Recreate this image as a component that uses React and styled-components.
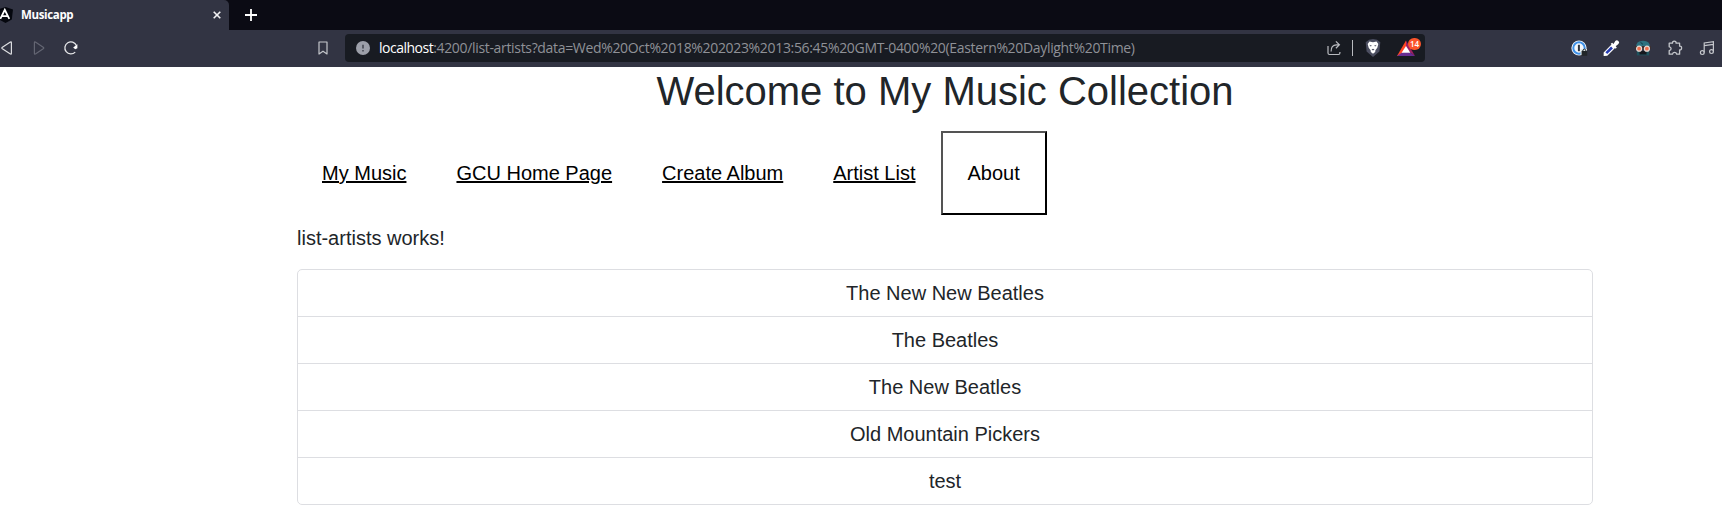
import React from 'react';
import styled, { createGlobalStyle } from 'styled-components';

const GlobalStyle = createGlobalStyle`
  *, *::before, *::after { box-sizing: border-box; }
  body {
    margin: 0;
    background: #fff;
    color: #212529;
    font: 20px/30px "Liberation Sans", Arial, sans-serif;
    overflow: hidden;
  }
`;

const BrowserChrome = styled.header`
  height: 67px;
  color: #fff;
  font-family: "Open Sans", "Noto Sans", sans-serif;
`;

const TabStrip = styled.div`
  display: flex;
  align-items: center;
  height: 30px;
  background: #0b0b14;
`;

const Tab = styled.div`
  display: flex;
  align-items: center;
  width: 229px;
  height: 30px;
  padding-right: 8px;
  background: #323443;
  border-top-right-radius: 5px;
`;

const TabTitle = styled.span`
  flex: 1;
  margin-left: 8px;
  font-size: 11.5px;
  font-weight: 700;
  line-height: 16px;
  letter-spacing: -0.35px;
`;

const NewTab = styled.div`
  display: flex;
  margin-left: 16px;
`;

const Toolbar = styled.div`
  display: flex;
  align-items: center;
  height: 37px;
  padding-bottom: 1px;
  background: #323443;
`;

const NavButtons = styled.div`
  display: flex;
  gap: 16px;
  width: 314px;
`;

const AddressBar = styled.div`
  display: flex;
  align-items: center;
  width: 1080px;
  height: 28px;
  margin-left: 15px;
  padding: 0 4px 0 10px;
  background: #181b22;
  border-radius: 4px;
`;

const Url = styled.span`
  flex: 1;
  margin-left: 8px;
  color: #8f9197;
  font-size: 14px;
  line-height: 18px;
  letter-spacing: -0.33px;
  white-space: nowrap;
`;

const Host = styled.span`
  color: #fff;
  letter-spacing: -0.5px;
`;

const Divider = styled.span`
  width: 1px;
  height: 16px;
  margin: 0 12px 0 11px;
  background: #b9bbc0;
`;

const Rewards = styled.div`
  position: relative;
  display: flex;
  margin-left: 16px;
  width: 24px;
  height: 20px;
`;

const Badge = styled.span`
  position: absolute;
  top: 0;
  left: 11px;
  width: 13px;
  height: 12px;
  border-radius: 6px;
  background: #fb542b;
  color: #fff;
  font-size: 8px;
  font-weight: 600;
  line-height: 12px;
  text-align: center;
`;

const Extensions = styled.div`
  display: flex;
  align-items: center;
  gap: 16px;
  margin-left: auto;
  padding-right: 7px;
`;

const Icon = styled.svg`
  display: block;
  flex: none;
  overflow: visible;
`;

const Page = styled.main`
  width: 1296px;
  margin-left: 297px;
`;

const Heading = styled.h1`
  margin: 0 0 16px;
  font-size: 40px;
  font-weight: 400;
  line-height: 48px;
  text-align: center;
`;

const Menu = styled.nav`
  display: flex;
  align-items: center;
  margin-bottom: 8px;
`;

const MenuLink = styled.a`
  padding: 25px;
  color: #000;
  text-decoration: underline;
  white-space: nowrap;
`;

const MenuButton = styled.button`
  padding: 25px;
  border: 2px outset #000;
  background: #fff;
  color: #000;
  font: inherit;
`;

const Status = styled.p`
  margin: 0 0 16px;
`;

const ArtistList = styled.ul`
  margin: 0;
  padding: 0;
  list-style: none;
  border: 1px solid #dddee2;
  border-radius: 5px;
  text-align: center;
`;

const Artist = styled.li`
  padding: 8px 16px;
  & + & { border-top: 1px solid #dddee2; }
`;

const AngularIcon = () => (
  <Icon width="13" height="16" viewBox="0 0 13 16">
    <path d="M0 1.8 5.5 0 13 2.5 11.8 12.5 5.5 16 0 13Z" fill="#05070e" />
    <path d="M0.3 11.8 4.8 2.8 9.3 11.8M2 9.2H7.6" fill="none" stroke="#fff" strokeWidth="1.8" />
  </Icon>
);

const CloseIcon = () => (
  <Icon width="8" height="8" viewBox="0 0 8 8">
    <path d="M.7.7 7.3 7.3M7.3.7.7 7.3" stroke="#f2f2f4" strokeWidth="1.6" />
  </Icon>
);

const PlusIcon = () => (
  <Icon width="12" height="12" viewBox="0 0 12 12">
    <path d="M6 0V12M0 6H12" stroke="#fff" strokeWidth="1.8" />
  </Icon>
);

const BackIcon = () => (
  <Icon width="16" height="16" viewBox="0 0 16 16">
    <path d="M10 2.2Q11.4 1.3 11.4 2.8V13.2Q11.4 14.7 10 13.8L2.4 8.8Q1.3 8 2.4 7.2Z" fill="none" stroke="#dddee1" strokeWidth="1.2" />
  </Icon>
);

const ForwardIcon = () => (
  <Icon width="16" height="16" viewBox="0 0 16 16">
    <path d="M3.8 2.2Q2.4 1.3 2.4 2.8V13.2Q2.4 14.7 3.8 13.8L11.2 8.8Q12.3 8 11.2 7.2Z" fill="none" stroke="#646673" strokeWidth="1.2" />
  </Icon>
);

const ReloadIcon = () => (
  <Icon width="16" height="16" viewBox="0 0 16 16">
    <path d="M11.2 12.1A6 6 0 1 1 12.4 5.6" fill="none" stroke="#e6e7e9" strokeWidth="1.3" />
    <path d="M9.2 7.5 13.4 4.2V8.2L11.2 9.2Z" fill="#fff" />
  </Icon>
);

const BookmarkIcon = () => (
  <Icon width="16" height="16" viewBox="0 0 16 16">
    <path d="M5 2H13V14L9 11.2 5 14Z" fill="none" stroke="#c4c6cb" strokeWidth="1.2" strokeLinejoin="round" />
  </Icon>
);

const InfoIcon = () => (
  <Icon width="16" height="16" viewBox="0 0 16 16">
    <circle cx="8" cy="8" r="7" fill="#9c9fa9" />
    <path d="M8 4.8V8.6M8 10V11.4" stroke="#3a3d48" strokeWidth="1.4" />
  </Icon>
);

const ShareIcon = () => (
  <Icon width="16" height="16" viewBox="0 0 16 16">
    <path d="M3 6V13Q3 14.5 4.5 14.5H13.5Q14.9 14.5 14.9 13V12" fill="none" stroke="#b9bbc0" strokeWidth="1.2" />
    <path d="M6.1 11.5Q5.9 5 11.5 4.8H14.1M10.9 1.4 14.4 4.8 10.9 8.2" fill="none" stroke="#b9bbc0" strokeWidth="1.2" />
  </Icon>
);

const BraveShieldIcon = () => (
  <Icon width="16" height="18" viewBox="0 0 16 18">
    <path d="M4 .8 8 0 12 .8 15.3 3.2 14.4 12.5 8 18 1.6 12.5.7 3.2Z" fill="#4b4e60" />
    <path d="M4.5 2.6 8 3.2 11.5 2.6 13.3 5 12.3 8.7 10.4 11.2 10.2 13 8 14.8 5.8 13 5.6 11.2 3.7 8.7 2.7 5Z" fill="#fff" />
    <path d="M4.3 5.8 7 6.7 5.6 7.6ZM11.7 5.8 9 6.7 10.4 7.6ZM6.5 10.6 8 9.7 9.5 10.6 8 11.6Z" fill="#4b4e60" />
  </Icon>
);

const RewardsIcon = () => (
  <Icon width="18" height="20" viewBox="0 0 18 20">
    <path d="M9 2.5 0 18H4.5L9 10Z" fill="#ff4724" />
    <path d="M0 18H18L13.2 14.3H5.5Z" fill="#662d91" />
    <path d="M9 2.5V10L13.2 14.3 18 18Z" fill="#9e1f63" />
    <path d="M9 8 4.6 14.8H13.4Z" fill="#fff" />
  </Icon>
);

const PasswordIcon = () => (
  <Icon width="16" height="16" viewBox="0 0 16 16">
    <circle cx="8" cy="8" r="7.6" fill="#f4f7fb" />
    <circle cx="8" cy="8" r="5.7" fill="#f4f7fb" stroke="#3f91e8" strokeWidth="2" />
    <path d="M7.9 4.8V11.2" stroke="#303540" strokeWidth="2" />
    <path d="M9.5 9H16V15H9.5Z" fill="#dfe6e8" />
    <path d="M10.6 11H16.2V15.8H10.6Z" fill="#222629" />
    <path d="M11.9 11.2V10Q13.4 8.2 14.9 10V11.2" fill="none" stroke="#222629" />
  </Icon>
);

const DropperIcon = () => (
  <Icon width="16" height="16" viewBox="0 0 16 16">
    <path d="M1.5 12.8 9 5.3 11.3 7.6 3.9 15 1.5 15.2Z" fill="#fff" stroke="#fff" strokeWidth="1.7" />
    <path d="M3.3 13.2 9 7.5" stroke="#263cb4" strokeWidth="2.6" />
    <path d="M7.7 3.8 9.2 2.8 10.5 4 12.3 1Q13.8-.5 15.4 1T15.4 4L12.7 6.2 13.8 7.5 12.7 8.8Z" fill="#fff" />
  </Icon>
);

const GogglesIcon = () => (
  <Icon width="16" height="16" viewBox="0 0 16 16">
    <path d="M1 7Q1 .7 8 .7T15 7Z" fill="#2d7280" />
    <path d="M1.8 11H14.2V15.4H1.8Z" fill="#1e525d" />
    <path d="M4.5 11H11.5L11.5 14.5H4.5Z" fill="#15171d" />
    <path d="M0 6H16V9H0Z" fill="#3b3031" />
    <circle cx="4.1" cy="8.7" r="2.5" fill="#ef704d" stroke="#e4dcd8" strokeWidth="1.2" />
    <circle cx="11.9" cy="8.7" r="2.5" fill="#ef704d" stroke="#e4dcd8" strokeWidth="1.2" />
    <path d="M5.5 2.3 8 4.4" stroke="#133d48" />
  </Icon>
);

const PuzzleIcon = () => (
  <Icon width="16" height="16" viewBox="0 0 16 16">
    <path d="M2.2 3.2H5.5Q5.3 1.2 7.3 1.2T9.1 3.2H12.6V6.2Q14.6 6 14.6 8T12.6 9.8V14.2H9.7Q9.3 12.4 7.6 12.4T5.5 14.2H2.2V10.6Q4.2 10.2 4.1 8.6T2.2 6.8Z" fill="none" stroke="#c4c6cb" strokeWidth="1.3" strokeLinejoin="round" />
  </Icon>
);

const MusicIcon = () => (
  <Icon width="16" height="16" viewBox="0 0 16 16">
    <path d="M5.2 12.5V3L14.4 1.6V11.4M5.2 5.7 14.4 4.3" fill="none" stroke="#c4c6cb" strokeWidth="1.2" />
    <circle cx="3.3" cy="12.6" r="1.9" fill="none" stroke="#c4c6cb" strokeWidth="1.2" />
    <circle cx="12.5" cy="11.6" r="1.9" fill="none" stroke="#c4c6cb" strokeWidth="1.2" />
  </Icon>
);

const links = ['My Music', 'GCU Home Page', 'Create Album', 'Artist List'];
const artists = ['The New New Beatles', 'The Beatles', 'The New Beatles', 'Old Mountain Pickers', 'test'];

export default function App() {
  return (
    <>
      <GlobalStyle />
      <BrowserChrome>
        <TabStrip>
          <Tab>
            <AngularIcon />
            <TabTitle>Musicapp</TabTitle>
            <CloseIcon />
          </Tab>
          <NewTab><PlusIcon /></NewTab>
        </TabStrip>
        <Toolbar>
          <NavButtons>
            <BackIcon />
            <ForwardIcon />
            <ReloadIcon />
          </NavButtons>
          <BookmarkIcon />
          <AddressBar>
            <InfoIcon />
            <Url>
              <Host>localhost</Host>
              :4200/list-artists?data=Wed%20Oct%2018%202023%2013:56:45%20GMT-0400%20(Eastern%20Daylight%20Time)
            </Url>
            <ShareIcon />
            <Divider />
            <BraveShieldIcon />
            <Rewards>
              <RewardsIcon />
              <Badge>14</Badge>
            </Rewards>
          </AddressBar>
          <Extensions>
            <PasswordIcon />
            <DropperIcon />
            <GogglesIcon />
            <PuzzleIcon />
            <MusicIcon />
          </Extensions>
        </Toolbar>
      </BrowserChrome>
      <Page>
        <Heading>Welcome to My Music Collection</Heading>
        <Menu>
          {links.map((label) => <MenuLink key={label} href="#">{label}</MenuLink>)}
          <MenuButton type="button">About</MenuButton>
        </Menu>
        <Status>list-artists works!</Status>
        <ArtistList>
          {artists.map((name) => <Artist key={name}>{name}</Artist>)}
        </ArtistList>
      </Page>
    </>
  );
}
